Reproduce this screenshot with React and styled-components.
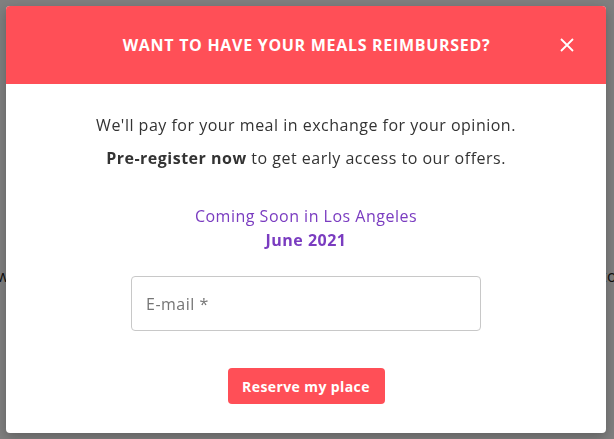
import * as React from "react";
import styled, { createGlobalStyle } from "styled-components";

const Global = createGlobalStyle`
  html, body {
    margin: 0;
    padding: 0;
    width: 614px;
    height: 439px;
    overflow: hidden;
    background: #fff;
    font-family: "Open Sans", "Liberation Sans", sans-serif;
  }
`;

const Page = styled.div`
  width: 614px;
  height: 439px;
  padding-top: 265px;
  box-sizing: border-box;
  display: flex;
  justify-content: center;
  overflow: hidden;

  p {
    margin: 0;
    flex-shrink: 0;
    font-size: 16px;
    letter-spacing: 0.5px;
    color: #222;
    white-space: nowrap;
  }
`;

const Overlay = styled.div`
  position: fixed;
  inset: 0;
  background: rgba(0, 0, 0, 0.5);
  display: flex;
  justify-content: center;
  padding: 6px 2px 0 0;
  box-sizing: border-box;
`;

const Modal = styled.div`
  width: 600px;
  height: 427px;
  background: #fff;
  border-radius: 4px;
  overflow: hidden;
  box-shadow: 0 4px 12px rgba(0, 0, 0, 0.25);
  display: flex;
  flex-direction: column;
`;

const Header = styled.div`
  height: 78px;
  flex-shrink: 0;
  background: #ff4f57;
  display: flex;
  align-items: center;
  justify-content: center;
  position: relative;

  h2 {
    margin: 0 0 0 1px;
    color: #fff;
    font-size: 16px;
    font-weight: 700;
    letter-spacing: 0.7px;
  }
`;

const Close = styled.button`
  position: absolute;
  right: 31px;
  top: 31px;
  width: 16px;
  height: 16px;
  padding: 0;
  border: none;
  background: none;
  display: flex;
  cursor: pointer;
`;

const Body = styled.div`
  display: flex;
  flex-direction: column;
  align-items: center;
  padding-top: 30px;
  color: #333;
  font-size: 16px;
  letter-spacing: 0.5px;

  p {
    margin: 0;
    line-height: 22px;
  }

  p + p {
    margin-top: 11px;
  }

  b {
    font-weight: 700;
  }
`;

const Coming = styled.div`
  margin-top: 35px;
  color: #7a3cc0;
  text-align: center;
  line-height: 24px;

  strong {
    display: block;
    font-weight: 700;
  }
`;

const Input = styled.input`
  margin-top: 24px;
  width: 350px;
  height: 55px;
  box-sizing: border-box;
  border: 1px solid #c8c8c8;
  border-radius: 4px;
  padding: 0 14px;
  font-family: inherit;
  font-size: 16px;
  letter-spacing: 0.5px;
  color: #333;
  outline: none;

  &::placeholder {
    color: #757575;
  }
`;

const Button = styled.button`
  margin-top: 37px;
  width: 157px;
  height: 36px;
  border: none;
  border-radius: 4px;
  background: #ff4f57;
  color: #fff;
  font-family: inherit;
  font-size: 14px;
  font-weight: 700;
  letter-spacing: 0.4px;
  cursor: pointer;
`;

export default function App() {
  return (
    <>
      <Global />
      <Page>
        <p>Browse the restaurants near you and reserve your place for a reimbursed meal today</p>
      </Page>
      <Overlay>
        <Modal>
          <Header>
            <h2>WANT TO HAVE YOUR MEALS REIMBURSED?</h2>
            <Close aria-label="Close">
              <svg width="16" height="16" viewBox="0 0 16 16">
                <path d="M2 2 L14 14 M14 2 L2 14" stroke="#fff" strokeWidth="1.8" />
              </svg>
            </Close>
          </Header>
          <Body>
            <p>We'll pay for your meal in exchange for your opinion.</p>
            <p>
              <b>Pre-register now</b> to get early access to our offers.
            </p>
            <Coming>
              Coming Soon in Los Angeles
              <strong>June 2021</strong>
            </Coming>
            <Input placeholder="E-mail *" />
            <Button>Reserve my place</Button>
          </Body>
        </Modal>
      </Overlay>
    </>
  );
}
